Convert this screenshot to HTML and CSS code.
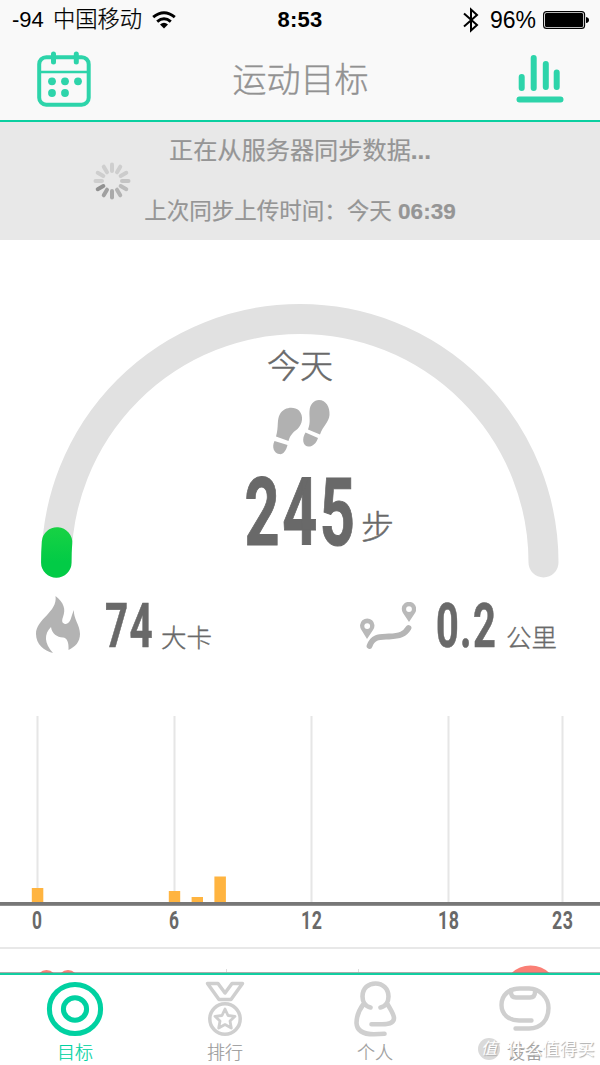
FILE: index.html
```html
<!DOCTYPE html>
<html lang="zh-CN">
<head>
<meta charset="utf-8">
<title>运动目标</title>
<link rel="stylesheet" href="styles.css">
</head>
<body>
<div class="app">
  <header class="header">
    <div class="status">
      <div class="status-left">
        <span class="carrier">-94 <span class="operator">中国移动</span></span>
        <svg class="wifi" width="24" height="18" viewBox="0 0 24 18" fill="none" stroke="#000" stroke-width="3">
          <path d="M1.2 6.2Q12-2.6 22.8 6.2"/><path d="M5.2 10.6Q12 5 18.8 10.6"/>
          <path d="M8 13.4Q12 10 16 13.4L12 17.4Z" fill="#000" stroke="none"/>
        </svg>
      </div>
      <span class="clock">8:53</span>
      <div class="status-right">
        <svg width="16" height="26" viewBox="0 0 16 26" fill="none" stroke="#000" stroke-width="2"><path d="M1 6.5L14 18L8 23.5V2.500L14 8L1 19.500"/></svg>
        <span class="percent">96%</span>
        <svg width="46" height="18" viewBox="0 0 46 18"><rect x=".6" y=".6" width="41" height="16.800" rx="3" fill="none" stroke="#000" stroke-width="1.100"/><rect x="2" y="2" width="38.200" height="14" rx="1.500"/><path d="M43 6Q46 6.500 46 9T43 12Z"/></svg>
      </div>
    </div>
    <nav class="nav">
      <svg width="54" height="56" viewBox="0 0 54 56" fill="none" stroke="#2dd4aa" stroke-width="4">
        <rect x="2.200" y="6.200" width="49.500" height="47.500" rx="7"/>
        <path d="M2 21H52" stroke-width="2.500"/><path d="M16.500 3V11M39.300 3V11" stroke-width="5" stroke-linecap="round"/>
        <g fill="#2dd4aa" stroke="none"><circle cx="15" cy="30.300" r="3.900"/><circle cx="28" cy="30.300" r="3.900"/><circle cx="41" cy="30.300" r="3.900"/><circle cx="15" cy="42" r="3.900"/><circle cx="28" cy="42" r="3.900"/></g>
      </svg>
      <h1 class="title">运动目标</h1>
      <svg width="48" height="50" viewBox="0 0 48 50" stroke="#2dd4aa" stroke-width="6" stroke-linecap="round"><path d="M5.700 23V34M17.700 4V34M29.800 10V33M40.700 18.500V33M3.500 45.500H44.500"/></svg>
    </nav>
  </header>

  <section class="sync">
    <svg class="spinner" width="38" height="38" viewBox="-19 -19 38 38" stroke-width="4" stroke-linecap="round">
      <path d="M0-10V-16.500" stroke="#cecece"/>
      <path d="M0-10V-16.500" stroke="#cecece" transform="rotate(30)"/>
      <path d="M0-10V-16.500" stroke="#cccccc" transform="rotate(60)"/>
      <path d="M0-10V-16.500" stroke="#c4c4c4" transform="rotate(90)"/>
      <path d="M0-10V-16.500" stroke="#bcbcbc" transform="rotate(120)"/>
      <path d="M0-10V-16.500" stroke="#b3b3b3" transform="rotate(150)"/>
      <path d="M0-10V-16.500" stroke="#aaaaaa" transform="rotate(180)"/>
      <path d="M0-10V-16.500" stroke="#a0a0a0" transform="rotate(210)"/>
      <path d="M0-10V-16.500" stroke="#919191" transform="rotate(240)"/>
      <path d="M0-10V-16.500" stroke="#cecece" transform="rotate(270)"/>
      <path d="M0-10V-16.500" stroke="#cecece" transform="rotate(300)"/>
      <path d="M0-10V-16.500" stroke="#cecece" transform="rotate(330)"/>
    </svg>
    <div class="sync-text">
      <p class="sync-now">正在从服务器同步数据<b>...</b></p>
      <p class="sync-last">上次同步上传时间：今天 <b>06:39</b></p>
    </div>
  </section>

  <section class="gauge">
    <svg width="600" height="350" viewBox="0 240 600 350">
      <defs><linearGradient id="progress" x1="0" y1="527" x2="0" y2="577" gradientUnits="userSpaceOnUse"><stop offset="0" stop-color="#18d244"/><stop offset=".7" stop-color="#02cb46"/></linearGradient></defs>
      <path d="M56.500 562.500A243.500 243.500 0 0 1 543.500 562.500" fill="none" stroke="#e1e1e1" stroke-width="30" stroke-linecap="round"/>
      <path d="M56.300 562.500Q56.300 552 57 542.500" fill="none" stroke="url(#progress)" stroke-width="30.500" stroke-linecap="round"/>
      <text class="today" x="300" y="378" text-anchor="middle">今天</text>
      <g fill="#b1b1b1">
        <path d="M276 436.500C279 427 276.500 420 280 414C284 407 294 406 299 410.500C304 416 302.500 424 297.500 429C292 433 290 436 288.500 441Z"/>
        <path d="M274.500 441L287.500 445C286 451 283 455 279 454C274 453 271.500 447 274.500 441Z"/>
        <path d="M308 429.500C311 422 309 417 309.500 411C310 404 314 400 319 400C326 400 330 407 329.500 415C329 422 323 426 320 434.500Z"/>
        <path d="M305.500 432.500L318 438C316 444 312 447 308 446.500C303 446 301.500 439 305.500 432.500Z"/>
      </g>
      <text class="figure steps" x="244.500" y="545" textLength="113" lengthAdjust="spacingAndGlyphs">245</text>
      <text class="unit-large" x="361" y="539">步</text>
    </svg>
  </section>

  <section class="stats">
    <div class="stat calories">
      <svg width="46" height="58" viewBox="0 0 46 58" fill="#b3b3b3"><path d="M20.500 0C29 7 31 13 28 21C26 26 28 28 31 28C36 27 36 20 39 14C38 22 45 29 45 38C45 46 40 51 33.500 54C34 46 32 42 28 41.500C22 41 17 38 16 31C9 38 9 47 18 57C9 55 1 48 1 38C1 23 23 16 20.500 0Z"/></svg>
      <svg class="number" width="50" height="68"><text class="figure" x="0" y="51" textLength="49" lengthAdjust="spacingAndGlyphs">74</text></svg>
      <span class="unit">大卡</span>
    </div>
    <div class="stat distance">
      <svg width="56" height="48" viewBox="0 0 56 48"><g fill="#b9b9b9" fill-rule="evenodd"><path d="M7 37L1.500 28A7.200 7.200 0 1 1 13 28ZM7.200 21.200A2.900 2.900 0 1 0 7.200 27A2.900 2.900 0 1 0 7.200 21.200Z"/><path d="M49 20L43 11A7.200 7.200 0 1 1 55 11ZM49 4.200A2.900 2.900 0 1 0 49 10A2.900 2.900 0 1 0 49 4.200Z"/></g><path d="M9.500 44C13 34 20 35 29 34.500C40 34 45 32 48.500 26" fill="none" stroke="#b5b5b5" stroke-width="5.800" stroke-linecap="round"/></svg>
      <svg class="number" width="64" height="68"><text class="figure" x="0" y="51" textLength="61" lengthAdjust="spacingAndGlyphs">0.2</text></svg>
      <span class="unit">公里</span>
    </div>
  </section>

  <section class="chart">
    <svg width="600" height="233" viewBox="0 716 600 233">
      <path d="M37.500 716V902M174.500 716V902M311.500 716V902M448.500 716V902M562.500 716V902" stroke="#e6e6e6" stroke-width="2"/>
      <g fill="#ffb440"><rect x="31.800" y="888" width="11.500" height="14"/><rect x="168.800" y="891" width="11.400" height="11"/><rect x="191.600" y="897" width="11.400" height="5"/><rect x="214.400" y="876.500" width="11.500" height="25.500"/></g>
      <rect y="902" width="600" height="3.800" fill="#777"/>
      <text class="figure tick" x="32" y="929" textLength="10.500" lengthAdjust="spacingAndGlyphs">0</text>
      <text class="figure tick" x="169" y="929" textLength="10.500" lengthAdjust="spacingAndGlyphs">6</text>
      <text class="figure tick" x="301" y="929" textLength="21.500" lengthAdjust="spacingAndGlyphs">12</text>
      <text class="figure tick" x="438" y="929" textLength="21.500" lengthAdjust="spacingAndGlyphs">18</text>
      <text class="figure tick" x="552" y="929" textLength="21.500" lengthAdjust="spacingAndGlyphs">23</text>
      <path d="M0 948H600" stroke="#e8e8e8" stroke-width="2"/>
    </svg>
  </section>

  <section class="next-card">
    <svg width="600" height="24" viewBox="0 949 600 24"><g fill="#fa7f75"><circle cx="46.500" cy="980" r="10"/><circle cx="68" cy="980" r="10"/><circle cx="530.500" cy="993" r="27.500"/></g><path d="M226.500 969V972M358.500 969V972" stroke="#ddd"/><path d="M0 972.500H600" stroke="#888" stroke-opacity=".7"/></svg>
  </section>

  <footer class="tabs">
    <div class="tab active">
      <svg width="60" height="60" viewBox="0 0 60 60" fill="none" stroke="#00d1a1" stroke-width="5"><ellipse cx="30" cy="31" rx="25.600" ry="24.600"/><ellipse cx="30" cy="31" rx="11.600" ry="11.200"/></svg>
      <span>目标</span>
    </div>
    <div class="tab">
      <svg width="60" height="60" viewBox="0 0 60 60" fill="none" stroke="#cfcfcf" stroke-width="3.500" stroke-linejoin="round"><path d="M12.500 5.500H23L30 15L37 5.500H47.500L36 21.500H24Z"/><circle cx="30" cy="41" r="15.200"/><path d="M30 31L33 37.500L40 38.300L35 43L36.300 50L30 46.600L23.700 50L25 43L20 38.300L27 37.500Z" stroke-width="2.800"/></svg>
      <span>排行</span>
    </div>
    <div class="tab">
      <svg width="60" height="60" viewBox="0 0 60 60" fill="none" stroke="#cfcfcf" stroke-width="4.600" stroke-linecap="round" stroke-linejoin="round"><path d="M25.500 29.500C20.500 28.500 17.500 24 17.500 18.500C17.500 10 23.500 5.500 30.500 5.500C38 5.500 43.500 11 43.500 18.500C43.500 24 40.500 28.500 35.500 29.500M18.500 26C14 32 11.500 38 11.500 45C12 54 20 56.300 29 56.300L39.500 55.800M42.500 26C45 31 48.500 35 49 40C49 45 43 46.300 37 46.300H26.500"/></svg>
      <span>个人</span>
    </div>
    <div class="tab">
      <svg width="60" height="60" viewBox="0 0 60 60" fill="none" stroke="#cfcfcf" stroke-width="4.400" stroke-linecap="round" stroke-linejoin="round"><path d="M36.500 42.500H24C14 42.500 6.500 36.500 6.500 27C6.500 17 14 10.500 25 10.500H34C45 10.500 53.500 20 53.500 30C53.500 42 46 50.500 34 50.500H20.500"/><path d="M16 12V14Q16 19.500 21 19.500H35Q40 19.500 40 14V12"/></svg>
      <span>设备</span>
    </div>
  </footer>
  <div class="watermark"><span class="seal">值</span><span class="brand">什么值得买</span></div>
</div>
</body>
</html>
```
FILE: styles.css
```css
* { box-sizing: border-box; }
body { margin: 0; background: #fff; font-family: "Liberation Sans", "Noto Sans CJK SC", sans-serif; }
h1, p { margin: 0; }
svg { display: block; flex: none; }
.app { position: relative; width: 600px; height: 1065px; overflow: hidden; background: #fff; }

.header { height: 122px; background: #f9f9f9; border-bottom: 2px solid #0bcfa0; }
.status { height: 40px; display: grid; grid-template-columns: 1fr auto 1fr; align-items: center; padding: 0 11px 0 12px; font-size: 22px; line-height: 40px; color: #000; white-space: nowrap; }
.status-left, .status-right { display: flex; align-items: center; height: 38px; }
.operator { font-weight: 300; font-size: 22.300px; margin-left: 3px; -webkit-text-stroke: .25px; }
.wifi { margin-left: 10px; }
.clock { font-weight: 700; letter-spacing: .2px; margin-left: -1px; }
.status-right { justify-content: flex-end; }
.percent { margin: 0 7px 0 11px; font-size: 23px; }
.nav { height: 80px; display: flex; justify-content: space-between; align-items: center; padding: 0 36px 2px 37px; }
.title { font-size: 34px; line-height: 50px; font-weight: 300; -webkit-text-stroke: .4px; color: #929292; margin: 2px 6px 0 0; }

.sync { height: 118px; display: flex; align-items: center; background: #e8e8e8; color: #959595; padding-left: 93px; }
.sync-text { width: 310px; margin: 1px 0 0 14px; display: flex; flex-direction: column; align-items: center; gap: 25px; white-space: nowrap; -webkit-text-stroke: .2px; }
.sync-now { font-size: 24.2px; line-height: 36px; }
.sync-last { font-size: 22.5px; line-height: 36px; }

.gauge { height: 350px; }
.figure { font-family: Roboto, "Liberation Sans", sans-serif; font-weight: 700; font-size: 61px; letter-spacing: 2px; fill: #696969; stroke: #696969; stroke-width: .6px; }
.steps { font-size: 95px; letter-spacing: 4px; stroke-width: 1px; }
.today, .unit-large { font-family: "Noto Sans CJK SC", sans-serif; font-weight: 300; font-size: 33px; fill: #696969; stroke: #696969; stroke-width: .5px; }
.stats { height: 126px; display: flex; justify-content: space-between; align-items: flex-start; padding: 6px 43px 0 35px; }
.stat { display: flex; align-items: flex-start; }
.distance > svg:first-child { margin-top: 6px; }
.number { margin: 0 6px 0 24px; overflow: visible; }
.distance .number { margin-left: 20px; }
.unit { font-size: 25.500px; font-weight: 300; -webkit-text-stroke: .35px; line-height: 40px; color: #696969; padding-top: 22px; }
.chart { height: 233px; }
.tick { font-size: 26.500px; letter-spacing: .8px; stroke-width: 0; }
.next-card { height: 24px; }

.tabs { height: 92px; display: grid; grid-template-columns: repeat(4, 1fr); background: #fff; border-top: 2px solid #12cea1; }
.tab { display: flex; flex-direction: column; align-items: center; padding-top: 3px; color: #9a9a9a; font-size: 18px; line-height: 30px; font-weight: 300; -webkit-text-stroke: .2px; }
.active { color: #00d1a1; }
.watermark { position: absolute; left: 478px; top: 1037px; display: flex; align-items: center; gap: 7px; color: #fff; font-size: 17.500px; line-height: 24px; white-space: nowrap; text-shadow: 1px 1px 1px #aaa; }
.seal { width: 22px; height: 22px; border-radius: 50%; text-align: center; line-height: 21px; font-size: 16px; font-style: italic; background: #dadada; }
```
